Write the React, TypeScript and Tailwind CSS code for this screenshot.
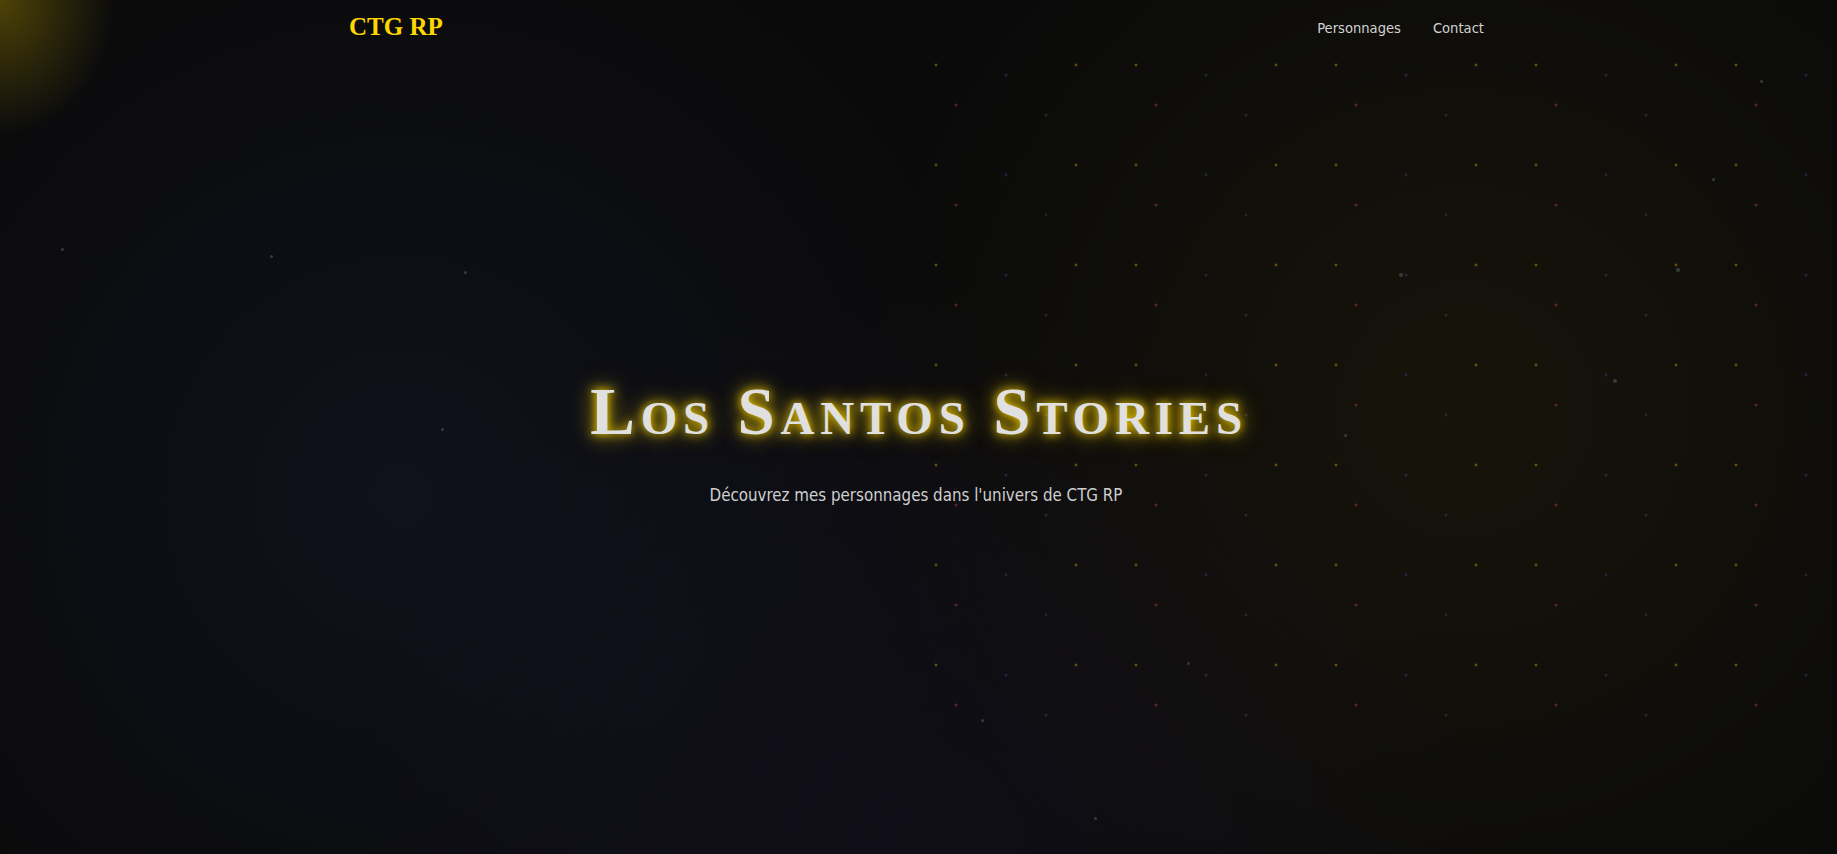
import React from 'react';

const PARTICLES = [
  { x: 62, y: 249, s: 3 },
  { x: 271, y: 256, s: 3 },
  { x: 465, y: 272, s: 3 },
  { x: 442, y: 429, s: 3 },
  { x: 1761, y: 81, s: 3 },
  { x: 1713, y: 179, s: 3 },
  { x: 1401, y: 275, s: 4 },
  { x: 1678, y: 270, s: 4 },
  { x: 1615, y: 381, s: 4 },
  { x: 1345, y: 435, s: 3 },
  { x: 982, y: 720, s: 3 },
  { x: 1095, y: 818, s: 3 },
  { x: 1188, y: 663, s: 3 },
];

const App: React.FC = () => {
  return (
    <div className="min-h-[854px] w-full bg-[#0a0a0a] overflow-hidden">
      <div className="relative w-[1832px] min-h-[854px] bg-[#0a0a0a] font-['Liberation_Sans',sans-serif]">
        {/* background glows */}
        <div className="absolute inset-0 bg-[image:radial-gradient(ellipse_115px_135px_at_0px_0px,rgba(255,215,0,0.28),transparent),radial-gradient(circle_at_22%_58%,rgba(35,45,90,0.22),transparent_40%),radial-gradient(circle_at_50%_100%,rgba(70,50,140,0.1),transparent_45%),radial-gradient(circle_at_80%_48%,rgba(255,200,0,0.05),transparent_40%)]"></div>

        {/* dot pattern */}
        <div className="absolute left-[916px] top-[35px] w-[916px] h-[700px] bg-[image:radial-gradient(2px_2px_at_20px_30px,rgba(255,200,0,0.5),transparent),radial-gradient(2px_2px_at_40px_70px,rgba(255,80,80,0.5),transparent),radial-gradient(2px_2px_at_90px_40px,rgba(110,110,230,0.35),transparent),radial-gradient(2px_2px_at_130px_80px,rgba(140,140,160,0.3),transparent),radial-gradient(2px_2px_at_160px_30px,rgba(255,200,0,0.5),transparent)] bg-[length:200px_100px]"></div>

        {/* floating particles */}
        {PARTICLES.map((p, i) => (
          <div
            key={i}
            className="absolute rounded-full bg-[#3a3b40]"
            style={{ left: p.x - p.s / 2, top: p.y - p.s / 2, width: p.s, height: p.s }}
          ></div>
        ))}

        <div className="relative z-10">
          {/* Header */}
          <header className="flex items-center justify-between pl-[349px] pr-[348px] py-[9px]">
            <div className="font-['Liberation_Serif',serif] font-bold text-[25px] leading-9 text-[#ffd700]">CTG RP</div>
            <nav className="flex items-center gap-8 pt-[1px] font-['DejaVu_Sans_Condensed',sans-serif] text-[14.6px] text-[#d2d2d2]">
              <a href="#">Personnages</a>
              <a href="#">Contact</a>
            </nav>
          </header>

          {/* Hero */}
          <section className="h-[800px] flex flex-col items-center justify-center pb-[21px] text-center">
            <h1 className="pl-[6px] font-['Liberation_Serif',serif] font-bold [font-variant:small-caps] text-[67px] leading-none tracking-[5.8px] text-[#e0e0e0] [text-shadow:0_0_10px_#ffd700,0_0_20px_rgba(255,215,0,0.55),0_0_30px_rgba(255,215,0,0.35)]">
              Los Santos Stories
            </h1>
            <p className="mt-[38px] font-['DejaVu_Sans_Condensed',sans-serif] text-[16.8px] leading-[1.5] text-[#cfcfcf]">
              Découvrez mes personnages dans l'univers de CTG RP
            </p>
          </section>
        </div>
      </div>
    </div>
  );
};

export default App;
